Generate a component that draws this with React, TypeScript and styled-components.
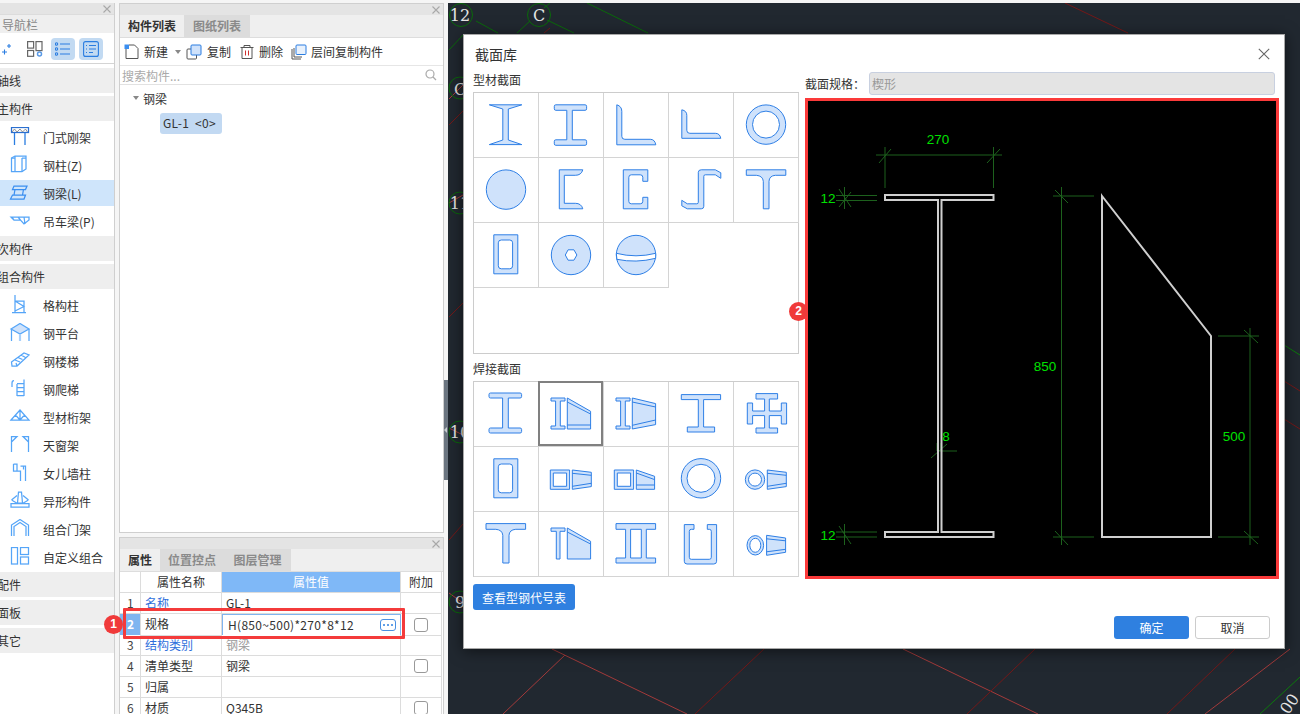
import React from 'react';
import styled, { createGlobalStyle } from 'styled-components';

const FONT = '"Noto Sans CJK SC", "Noto Sans", sans-serif';

const Global = createGlobalStyle`
  html, body { margin: 0; padding: 0; width: 1300px; height: 714px; overflow: hidden; background: #f5f5f5; }
  * { box-sizing: border-box; }
  body { font-family: ${FONT}; font-size: 12px; color: #333; }
`;

const Page = styled.div`
  width: 1300px; height: 714px; padding-top: 3px; display: flex; overflow: hidden; background: #f5f5f5;
`;
const Nav = styled.aside`
  width: 115px; height: 711px; flex: none; background: #fff; border-right: 1px solid #cfcfcf; display: flex; flex-direction: column;
`;
const CloseBar = styled.div<{ $h?: number }>`
  height: ${p => p.$h ?? 11}px; flex: none; background: #e4e4e4; display: flex; align-items: center; justify-content: flex-end; padding-right: 3px; color: #a8a8a8;
`;
const NavTitle = styled.div`
  height: 19px; flex: none; background: #efefef; color: #888; line-height: 19px; padding-left: 2px; font-size: 12px; border-top: 1px solid #dcdcdc;
`;
const NavTools = styled.div`
  height: 31px; flex: none; display: flex; gap: 4px; align-items: center; border-bottom: 1px solid #d4d4d4; background: #fff; padding-top: 1px;
`;
const IconBtn = styled.div<{ $w: number; $active?: boolean; $start?: boolean }>`
  width: ${p => p.$w}px; height: 22px; border-radius: 4px; display: flex; align-items: center; justify-content: ${p => (p.$start ? 'flex-start' : 'center')};
  background: ${p => (p.$active ? '#c2daf2' : 'transparent')};
`;
const NavList = styled.div`
  padding-top: 4px; display: flex; flex-direction: column;
`;
const NavHeader = styled.div<{ $mt?: number }>`
  height: 25px; background: #eeeeee; line-height: 25px; font-size: 12px; margin-top: ${p => p.$mt ?? 0}px; text-indent: -3px; overflow: hidden; color: #333;
`;
const NavGroup = styled.div`
  padding: 3px 0 2px; display: flex; flex-direction: column; gap: 2px;
`;
const NavRow = styled.div<{ $active?: boolean }>`
  height: 26px; display: flex; align-items: center; gap: 12px; padding-left: 9px; font-size: 12px; color: #333;
  background: ${p => (p.$active ? '#cfe5fb' : 'transparent')};
`;
const NavSvg = styled.svg`
  width: 22px; height: 20px; flex: none; fill: none; stroke: #55a5f8; stroke-width: 1.25;
`;
const MidCol = styled.div`
  width: 325px; margin-left: 4px; flex: none; display: flex; flex-direction: column; gap: 4px; padding-top: 0;
`;
const Panel = styled.section<{ $h: number }>`
  height: ${p => p.$h}px; flex: none; border: 1px solid #cfcfcf; background: #fff; display: flex; flex-direction: column; overflow: hidden; position: relative;
`;
const Tabs = styled.div`
  height: 23px; flex: none; background: #efefef; display: flex; border-bottom: 1px solid #ddd;
`;
const Tab = styled.div<{ $active?: boolean; $w: number }>`
  width: ${p => p.$w}px; text-align: center; line-height: 22px; font-weight: 700; font-size: 12px;
  color: ${p => (p.$active ? '#333' : '#8a8a8a')};
  background: ${p => (p.$active ? '#efefef' : '#dcdcdc')};
`;
const Toolbar = styled.div`
  height: 28px; flex: none; display: flex; align-items: center; padding-left: 4px; border-bottom: 1px solid #e6e6e6; font-size: 12px;
`;
const ToolIcon = styled.svg<{ $ml?: number; $mr?: number }>`
  width: 16px; height: 16px; flex: none; fill: none; stroke: #555; stroke-width: 1; margin-left: ${p => p.$ml ?? 0}px; margin-right: ${p => p.$mr ?? 4}px;
`;
const Caret = styled.span<{ $ml?: number }>`
  width: 0; height: 0; border-left: 3px solid transparent; border-right: 3px solid transparent; border-top: 4px solid #888; margin-left: ${p => p.$ml ?? 0}px; flex: none;
`;
const SearchRow = styled.div`
  height: 19px; flex: none; display: flex; align-items: center; justify-content: space-between; padding: 0 6px 0 2px; color: #aaa; font-size: 12px; border-bottom: 1px solid #e2e2e2;
`;
const Tree = styled.div`
  padding: 3px 0 0 13px; display: flex; flex-direction: column; font-size: 12px;
`;
const TreeRoot = styled.div`
  display: flex; align-items: center; gap: 4px; height: 20px; color: #333;
`;
const TreeTag = styled.div`
  margin: 5px 0 0 27px; width: 62px; height: 21px; line-height: 20px; background: #c2d9f2; border-radius: 3px; padding-left: 3px; font-size: 12px; white-space: pre; letter-spacing: .3px;
`;
const PropRow = styled.div<{ $head?: boolean }>`
  display: grid; grid-template-columns: 21px 81px 179px 41px; height: 21px; flex: none; line-height: 20px; font-size: 12px;
  & > * { border-right: 1px solid #dcdcdc; border-bottom: 1px solid #dcdcdc; }
`;
const Idx = styled.div<{ $active?: boolean }>`
  padding-left: 7px; font-size: 12px; color: ${p => (p.$active ? '#fff' : '#444')}; font-weight: ${p => (p.$active ? 700 : 400)};
  background: ${p => (p.$active ? '#7fb5f0' : '#fff')};
`;
const Name = styled.div<{ $blue?: boolean; $center?: boolean }>`
  padding-left: ${p => (p.$center ? 0 : 4)}px; text-align: ${p => (p.$center ? 'center' : 'left')}; color: ${p => (p.$blue ? '#2f6fdc' : '#333')};
`;
const Val = styled.div<{ $head?: boolean; $muted?: boolean }>`
  padding-left: ${p => (p.$head ? 0 : 4)}px; text-align: ${p => (p.$head ? 'center' : 'left')};
  background: ${p => (p.$head ? '#7fb8f7' : '#fff')}; color: ${p => (p.$head ? '#fff' : p.$muted ? '#999' : '#333')};
`;
const EditVal = styled.div`
  display: flex; align-items: center; justify-content: space-between; padding: 0 4px 0 5px; border: 1px solid #7fb5f0 !important; letter-spacing: .3px;
`;
const DotsBtn = styled.span`
  width: 16px; height: 12px; border: 1px solid #4a90e2; border-radius: 3px; display: flex; align-items: center; justify-content: center; gap: 2px;
  & > i { width: 2px; height: 2px; border-radius: 50%; background: #2f80e0; }
`;
const Add = styled.div<{ $center?: boolean }>`
  display: flex; align-items: center; justify-content: center; text-align: center;
`;
const Check = styled.span`
  width: 14px; height: 14px; border: 1px solid #999; border-radius: 3px; background: #fff;
`;
const RedBox = styled.div`
  position: absolute; left: 3px; top: 70px; width: 282px; height: 31px; border: 3.5px solid #f43b3b; pointer-events: none; border-radius: 1px;
`;
const Badge = styled.div<{ $x: number; $y: number }>`
  position: absolute; left: ${p => p.$x}px; top: ${p => p.$y}px; width: 19px; height: 19px; border-radius: 50%; background: #f03a3a; color: #fff;
  font: 700 12px/19px "Liberation Sans", sans-serif; text-align: center; z-index: 5;
`;
const Splitter = styled.div`
  width: 4px; flex: none; padding-top: 377px;
`;
const Handle = styled.div`
  width: 4px; height: 100px; background: #6b7580; display: flex; align-items: center;
  &::after { content: ''; border-right: 3px solid #c8ccd0; border-top: 3px solid transparent; border-bottom: 3px solid transparent; }
`;
const Canvas = styled.main`
  flex: 1; height: 711px; background: #212830; position: relative; overflow: hidden;
`;
const CanvasSvg = styled.svg`
  position: absolute; left: 0; top: 0;
`;
const Dialog = styled.div`
  position: absolute; left: 15px; top: 31px; width: 822px; height: 615px; background: #fff; border: 1px solid #a8a8a8; box-shadow: 0 2px 14px rgba(0,0,0,.55);
  display: flex; flex-direction: column; padding: 0 14px 0 9px;
`;
const DialogHead = styled.div`
  height: 37px; flex: none; display: flex; align-items: center; justify-content: space-between; padding: 0 0 0 2px; font-size: 14px; color: #333;
`;
const DialogBody = styled.div`
  display: flex; gap: 6px; flex: none;
`;
const LeftCol = styled.div`
  width: 326px; flex: none; display: flex; flex-direction: column;
`;
const Label = styled.div<{ $pt: number }>`
  padding-top: ${p => p.$pt}px; padding-bottom: 4px; line-height: 16px; font-size: 12px; color: #333;
`;
const SecGrid = styled.div<{ $h: number }>`
  width: 326px; height: ${p => p.$h}px; border: 1px solid #ccc; display: grid; grid-template-columns: repeat(5, 65px); grid-auto-rows: 65px; align-content: start;
`;
const Cell = styled.div<{ $sel?: boolean }>`
  width: 65px; height: 65px; border-right: 1px solid #d4d4d4; border-bottom: 1px solid #d4d4d4; position: relative;
  ${p => p.$sel ? `&::after { content: ''; position: absolute; inset: -1px 0 0 -1px; border: 2px solid #808080; }` : ''}
`;
const SecSvg = styled.svg`
  display: block; width: 64px; height: 64px; fill: #cfe2fb; stroke: #2e7fe6; stroke-width: 1; fill-rule: evenodd;
`;
const PrimaryBtn = styled.button<{ $w: number; $h: number; $mt?: number }>`
  width: ${p => p.$w}px; height: ${p => p.$h}px; margin-top: ${p => p.$mt ?? 0}px; border: 0; border-radius: 3px; background: #2f80e0; color: #fff; font: 12px ${FONT}; padding: 0; flex: none;
`;
const GhostBtn = styled.button`
  width: 75px; height: 23px; border: 1px solid #ccc; border-radius: 3px; background: #fff; color: #333; font: 12px ${FONT}; padding: 0; flex: none;
`;
const RightCol = styled.div`
  width: 474px; flex: none; display: flex; flex-direction: column; gap: 3px;
`;
const SpecRow = styled.div`
  height: 23px; display: flex; align-items: center; font-size: 12px; color: #333;
`;
const SpecLabel = styled.span`
  width: 64px; flex: none;
`;
const SpecInput = styled.div`
  width: 406px; height: 23px; background: #e4e4e4; border: 1px solid #c8d0e0; border-radius: 3px; color: #999; line-height: 21px; padding-left: 2px;
`;
const Preview = styled.div`
  width: 474px; height: 481px; border: 3px solid #fb3a3a; background: #000; position: relative;
`;
const PreviewSvg = styled.svg`
  display: block;
`;
const Footer = styled.div`
  display: flex; justify-content: flex-end; gap: 6px; margin-top: 6px; align-items: flex-start;
`;

const CloseX = ({ s = 8 }: { s?: number }) => (
  <svg width={s} height={s} viewBox="0 0 8 8" stroke="currentColor" strokeWidth="1.1" fill="none"><path d="M.5.5l7 7M7.5.5l-7 7" /></svg>
);

const I = (l: number, r: number, t: number, b: number, ft: number, wl: number, wr: number, c = 0) =>
  `M${l + c} ${t}H${r - c}Q${r} ${t} ${r} ${t + c}V${t + ft - c}Q${r} ${t + ft} ${r - c} ${t + ft}H${wr}V${b - ft}H${r - c}Q${r} ${b - ft} ${r} ${b - ft + c}V${b - c}Q${r} ${b} ${r - c} ${b}H${l + c}Q${l} ${b} ${l} ${b - c}V${b - ft + c}Q${l} ${b - ft} ${l + c} ${b - ft}H${wl}V${t + ft}H${l + c}Q${l} ${t + ft} ${l} ${t + ft - c}V${t + c}Q${l} ${t} ${l + c} ${t}Z`;

const hollow = 'M20.5 12.5H44.5V51.5H20.5ZM28 17.7H36.5Q39.3 17.7 39.3 20.5V43.5Q39.3 46.5 36.5 46.5H28Q25 46.5 25 43.5V20.5Q25 17.7 28 17.7Z';
const ring = (x: number, y: number, r: number) => `M${x - r} ${y}a${r} ${r} 0 1 0 ${2 * r} 0a${r} ${r} 0 1 0 ${-2 * r} 0Z`;
const ell = (x: number, y: number, a: number, b: number) => `M${x - a} ${y}a${a} ${b} 0 1 0 ${2 * a} 0a${a} ${b} 0 1 0 ${-2 * a} 0Z`;
const smallI = I(12.7, 26.7, 16.7, 47.7, 3, 17.3, 22);

const rolled: React.ReactNode[] = [
  <path d="M16 12.5H48.5L35 16.7V47.7L48.5 52.3H16L29.5 47.7V16.7Z" />,
  <path d={I(16, 48.3, 12.5, 53, 5.5, 28.5, 34, 1.5)} />,
  <path d="M13.5 12.5Q18.5 14 18.5 19V44Q18.5 47 21.5 47H47Q51.5 47 52.5 52.5H13.5Z" />,
  <path d="M13.5 17.5Q18.5 18.5 18.5 23V38Q18.5 41 21.5 41H47Q51.5 41 52.5 46H13.5Z" />,
  <path d={ring(32.7, 32.3, 19.7) + ring(32.7, 32.3, 13.5)} />,
  <path d={ring(32.7, 32.3, 19.7)} />,
  <path d="M21 12.5H44.5Q43 18 37 18H26V46H37Q43 46 44.5 51.5H21Z" />,
  <path d="M20 12.5H44.5V24H39.5V20Q39.5 17.5 37 17.5H28Q25.5 17.5 25.5 20V44Q25.5 46.5 28 46.5H37Q39.5 46.5 39.5 44V40H44.5V51.5H20Z" />,
  <path d="M30 15Q30 12.5 33 12.5H47L52.5 15.5V21L47 17.5H37Q35.5 17.5 35.5 19V49Q35.5 51.5 33 51.5H19L13.5 48.5V43L19 46.5H28.5Q30 46.5 30 45Z" />,
  <path d="M13 12.5H52.5V18H42Q36 18.5 35.7 24V51.5H30V24Q29.5 18.5 23 18H13Z" />,
  <path d={hollow} />,
  <path d={ring(32.7, 32.7, 19.7) + 'M27 32.7L29.8 27.5H35.6L38.6 32.7L35.6 37.9H29.8Z'} />,
  <>
    <path d={ring(32.7, 32.7, 19.7)} />
    <path d="M13 31Q32.7 36 52.4 31V36Q32.7 41 13.6 37Z" fill="#fff" />
  </>,
];

const wedgeAOutline = <path d="M29 16.7L52.3 30V47.7H29Z" />;
const wedgeA = (
  <>
    {wedgeAOutline}
    <path d="M29 20.7L52.3 32.7M29 43.7H52.3" fill="none" />
  </>
);
const wedgeB = (
  <>
    <path d="M29 16.7L52.3 22.3V43.3L29 47.7Z" />
    <path d="M29 20.7L52.3 25.7M29 44L52.3 38.7" fill="none" />
  </>
);
const wedgeSmall = (x: number) => (
  <>
    <path d={`M${x} 23.7L${x + 19} 26V40.3L${x} 43Z`} />
    <path d={`M${x} 27L${x + 19} 29M${x} 40L${x + 19} 37`} fill="none" />
  </>
);

const welded: React.ReactNode[] = [
  <path d={I(15.7, 48.3, 11.7, 51.7, 5, 29.3, 35, 1.5)} />,
  <><path d={smallI} />{wedgeA}</>,
  <><path d={smallI} />{wedgeB}</>,
  <path d="M13 13.300H52.300V18.300H35.300V45.700H46.300V50.700H19V45.700H30V18.300H13Z" />,
  <path d="M22.7 12.3H44.3V17.7H36V29.7H48V21.7H53.3V42.7H48V34.3H36V46.7H44.3V51.7H22.7V46.7H31.3V34.3H19.3V42.7H14V21.7H19.3V29.7H31.3V17.7H22.7Z" />,
  <path d={hollow} />,
  <><path d="M12 23.7H31.3V43H12ZM15 26.7H28.3V40H15Z" />{wedgeSmall(34)}</>,
  <>
    <path d="M11 23.7H30.3V43H11ZM14 26.7H27.3V40H14Z" />
    <path d="M33 23.7L51.3 30V43H33Z" />
    <path d="M33 26.7L51.3 33.3M33 38.7H51.3" fill="none" />
  </>,
  <path d={ring(32.7, 32, 19.7) + ring(32.7, 32, 14)} />,
  <><path d={ring(21.7, 33.3, 9.7) + ring(21.7, 33.3, 6.5)} />{wedgeSmall(34)}</>,
  <path d="M12.7 12.3H52.3V18H42.5Q36 18.5 35.7 24V51.7H29.5V24Q29 18.5 22.5 18H12.7Z" />,
  <>
    <path d="M12.7 16.7H26.7V20H21.7V47.7H18V20H12.7Z" />
    {wedgeAOutline}
    <path d="M29 20.7L52.3 32.7" fill="none" />
  </>,
  <path d="M12.7 12.3H52.3V18H43V46.7H52.3V51.7H12.7V46.7H22.3V18H12.7ZM27.3 18V46.7H38V18Z" />,
  <path d="M16 13.3H25.7V18H23Q21 18 21 20V46Q21 48 23 48H41Q43 48 43 46V20Q43 18 41 18H39V13.3H48.3V50Q48.3 52.7 45.5 52.7H18.7Q16 52.7 16 50Z" />,
  <>
    <path d={ell(22, 34, 8.3, 9.7) + ell(22, 34, 5.5, 7)} />
    <path d="M33.3 24L52.3 26.7V41L33.3 44Z" />
    <path d="M33.3 27.5L52.3 29.5M33.3 40.5L52.3 38" fill="none" />
  </>,
];

const Section = ({ children }: { children: React.ReactNode }) => (
  <SecSvg viewBox="0.7 0.7 64 64">{children}</SecSvg>
);

const navIcon = (c: React.ReactNode) => <NavSvg viewBox="0 0 22 20">{c}</NavSvg>;

const icons: Record<string, React.ReactNode> = {
  portal: <><rect x="2.5" y=".5" width="17" height="5" stroke="#2a6fd0" /><path d="M3 5l2.5-3 2.5 3 3-3 2.500 3 3-3 2 3" stroke="#777" strokeWidth=".8" /><path d="M5.5 6v12M16 6v12" stroke="#2a7de1" strokeWidth="1.3" /></>,
  column: <><path d="M2.5 3L6 1h11v13l-4 2.500H2.500Z" /><path d="M6 1v2H2.500M13 3v13.500M13 3h4M6 3v13" /></>,
  beam: <path d="M5 3h13l-1.500 3.500H3.500ZM3.500 12h13L15 16H1.500ZM6 6.500L5 12M14.500 6.500l-1 5.500" stroke="#3a8ef0" />,
  crane: <path d="M2 6h18v3l-5 4-3.500-4H5Zm1 0l2 3m4-3l2.500 3m3.500-3l1 7" />,
  lattice: <path d="M6 0v17.500M3 17.500h14M6 6h9v11.500M6 6l9 5.500L6 16" />,
  platform: <><path d="M2 6l9-5.500L20 6l-9 5Z" fill="#cfe2fb" /><path d="M2.500 6v12M20 6v12" /><path d="M11 11v7" stroke="#a8d0fb" strokeWidth="2.200" /></>,
  stairs: <path d="M2.500 11L15 2l5 2L8 15H3ZM6 9l5 2M9 6.500l4.500 2M12 4l4.500 2.500M3 15l-.5-4M8 15l-1-3" />,
  ladder: <path d="M5 1.500Q3 1.500 3 4v4M8 5v12M15 .500V17M8 4.500h7M8 8.500h7M8 12.500h7M8 16.500h7" />,
  truss: <path d="M2 13l9-10 9 10ZM11 3v10M6.500 8l4.500 5 4.500-5" />,
  skylight: <path d="M2.500 17V1.500H8L2.500 7M19.500 17V1.500H14L19.500 7" />,
  parapet: <path d="M4.500 1H8v7h3.500v10M14.500 3v3.500M11.500 3h5v15M4.500 1v7H8" />,
  special: <path d="M2.500 9L8 4.500M19.500 9L14 4.500M9.500 1h3l1 11H8.500ZM2 12.500h18v3.500H2ZM2.500 9l6 3.500M19.500 9l-6 3.500" />,
  gate: <path d="M2.500 17V6L11 .5 19.500 6v11M5 17V7.500L11 3.500l6 4V17" />,
  custom: <><rect x="2.500" y=".5" width="6" height="16.500" /><rect x="11.500" y=".5" width="8" height="7" /><rect x="11.500" y="10" width="8" height="7" /></>,
};

const group1 = [['门式刚架', 'portal'], ['钢柱(Z)', 'column'], ['钢梁(L)', 'beam'], ['吊车梁(P)', 'crane']];
const group2 = [['格构柱', 'lattice'], ['钢平台', 'platform'], ['钢楼梯', 'stairs'], ['钢爬梯', 'ladder'], ['型材桁架', 'truss'], ['天窗架', 'skylight'], ['女儿墙柱', 'parapet'], ['异形构件', 'special'], ['组合门架', 'gate'], ['自定义组合', 'custom']];

const DG = '#1d611d';
const Dim = () => (
  <g stroke={DG} strokeWidth="1" fill="none">
    <path d="M885 147V188M993.500 147V188M876 155H1002M879 163L891 149M987 163L1000 149" />
    <path d="M836 195.500H877M836 200.500H877M844.500 187V209M839 189L851 207M839 207L851 192" />
    <path d="M836 532H877M836 537H877M844.500 524V545M839 526L851 544" />
    <path d="M937 451H957M931 458L947 444M937 443V451M941 443V451" />
    <path d="M1061.500 187V545M1053 537H1094M1053 196H1094M1055 531L1068 545M1055 190L1068 203" />
    <path d="M1250 328V545M1218 336H1259M1218 537H1259M1244 330L1258 343M1244 531L1258 544" />
  </g>
);

const NumText = styled.text`
  font: 13.5px "Liberation Sans", sans-serif; fill: #00e000; text-anchor: middle;
`;
const GridLabel = styled.text`
  font: 16px "DejaVu Serif", serif; fill: #e4e4e4; text-anchor: middle;
`;

const lines: { d: string; c: string }[] = [
  { d: 'M104 646L239 711', c: '#a23a3a' }, { d: 'M117 652L55 711', c: '#a23a3a' },
  { d: 'M316 646L247 711', c: '#741818' }, { d: 'M455 646L590 711', c: '#a23a3a' },
  { d: 'M587 646L519 711', c: '#741818' }, { d: 'M787 646L719 711', c: '#741818' },
  { d: 'M842 646L757 711', c: '#a23a3a' }, { d: 'M852 674L812 711', c: '#0c7a0c' },
  { d: 'M28 18L50 30M82 18L69 30M99 17L126 30M139 0L200 30', c: '#0a6a0a' },
  { d: 'M102 0L96 5M1 47L15 32', c: '#0a6a0a' },
  { d: 'M102 25L96 30M617 0L680 30', c: '#741818' },
  { d: 'M1 96L15 82M1 200L15 192M1 425L15 432M1 590L15 600', c: '#a23a3a' },
  { d: 'M1 122L15 108M1 314L15 300M1 537L15 521', c: '#741818' },
  { d: 'M836 342L852 352', c: '#0c7a0c' }, { d: 'M836 378L852 388M836 416L852 426', c: '#741818' },
];

export default function App() {
  return (
    <>
      <Global />
      <Page>
        <Nav>
          <CloseBar><CloseX /></CloseBar>
          <NavTitle>导航栏</NavTitle>
          <NavTools>
            <IconBtn $w={23} $start>
              <svg width="14" height="14" viewBox="0 0 14 14" fill="none" stroke="#2a7de1" strokeWidth="1.1"><path d="M2 10h5M4.500 7.500v5M7 4h4M9 2v4" /></svg>
            </IconBtn>
            <IconBtn $w={20} $start>
              <svg width="16" height="16" viewBox="0 0 16 16" fill="none" stroke="#666" strokeWidth="1.2"><rect x=".6" y=".6" width="6" height="6.500" /><rect x="9" y=".6" width="6" height="9" /><rect x=".6" y="9.500" width="6" height="5.800" /><circle cx="12.500" cy="13" r="2" stroke="#5a9ae6" strokeWidth="1.500" /></svg>
            </IconBtn>
            <IconBtn $w={24} $active>
              <svg width="16" height="14" viewBox="0 0 16 14" fill="none" stroke="#2a7de1" strokeWidth="1.1"><circle cx="1.500" cy="2" r="1.200" /><circle cx="1.500" cy="7" r="1.200" /><circle cx="1.500" cy="12" r="1.200" /><path d="M5 2h10M5 7h10M5 12h10" /></svg>
            </IconBtn>
            <IconBtn $w={24} $active>
              <svg width="16" height="16" viewBox="0 0 16 16" fill="none" stroke="#2a7de1" strokeWidth="1.1"><rect x=".6" y=".6" width="14.800" height="14.800" rx="2" /><path d="M3 4.500h1M6 4.500h7M3 8h1M6 8h7M3 11.500h1M6 11.500h4" /></svg>
            </IconBtn>
          </NavTools>
          <NavList>
            <NavHeader>轴线</NavHeader>
            <NavHeader $mt={3}>主构件</NavHeader>
            <NavGroup>
              {group1.map(([t, k]) => (
                <NavRow key={t} $active={k === 'beam'}>{navIcon(icons[k])}<span>{t}</span></NavRow>
              ))}
            </NavGroup>
            <NavHeader>次构件</NavHeader>
            <NavHeader $mt={3}>组合构件</NavHeader>
            <NavGroup>
              {group2.map(([t, k]) => (
                <NavRow key={t}>{navIcon(icons[k])}<span>{t}</span></NavRow>
              ))}
            </NavGroup>
            <NavHeader>配件</NavHeader>
            <NavHeader $mt={3}>面板</NavHeader>
            <NavHeader $mt={3}>其它</NavHeader>
          </NavList>
        </Nav>

        <MidCol>
          <Panel $h={530}>
            <CloseBar><CloseX /></CloseBar>
            <Tabs>
              <Tab $active $w={64}>构件列表</Tab>
              <Tab $w={66}>图纸列表</Tab>
            </Tabs>
            <Toolbar>
              <ToolIcon viewBox="0 0 16 16" $mr={4}>
                <path d="M2 4V14.500H14V4.500L10.500 1H5" />
                <rect x="0.500" y="0.500" width="4.500" height="4.500" fill="#3a8ef0" stroke="none" />
              </ToolIcon>
              <span>新建</span>
              <Caret $ml={7} />
              <ToolIcon viewBox="0 0 16 16" $ml={5} $mr={5}>
                <rect x="1" y="5" width="9.500" height="10" rx="1" />
                <rect x="5" y="1" width="10" height="10" rx="1" fill="#cfe2fb" stroke="#2a7de1" />
              </ToolIcon>
              <span>复制</span>
              <ToolIcon viewBox="0 0 16 16" $ml={8} $mr={4}>
                <path d="M1.500 3.500h13M5 3.500V1.500h6v2M3 3.500v11h10v-11" />
                <path d="M6.500 6.500v5M9.500 6.500v5" stroke="#d03030" />
              </ToolIcon>
              <span>删除</span>
              <ToolIcon viewBox="0 0 16 16" $ml={8} $mr={4}>
                <path d="M1 5v10h9M3 4v9h8" />
                <rect x="5" y="1" width="10" height="9.500" rx="1" fill="#e8f1fc" stroke="#2a7de1" />
              </ToolIcon>
              <span>层间复制构件</span>
            </Toolbar>
            <SearchRow>
              <span>搜索构件...</span>
              <svg width="12" height="12" viewBox="0 0 12 12" fill="none" stroke="#aaa" strokeWidth="1.200"><circle cx="5" cy="5" r="4" /><path d="M8 8l3 3" /></svg>
            </SearchRow>
            <Tree>
              <TreeRoot><Caret />钢梁</TreeRoot>
              <TreeTag>GL-1  &lt;0&gt;</TreeTag>
            </Tree>
          </Panel>
          <Panel $h={178}>
            <CloseBar><CloseX /></CloseBar>
            <Tabs>
              <Tab $active $w={40}>属性</Tab>
              <Tab $w={64}>位置控点</Tab>
              <Tab $w={67}>图层管理</Tab>
            </Tabs>
            <PropRow>
              <Idx />
              <Name $center>属性名称</Name>
              <Val $head>属性值</Val>
              <Add>附加</Add>
            </PropRow>
            <PropRow>
              <Idx>1</Idx><Name $blue>名称</Name><Val>GL-1</Val><Add />
            </PropRow>
            <PropRow>
              <Idx $active>2</Idx><Name>规格</Name>
              <EditVal>H(850~500)*270*8*12<DotsBtn><i /><i /><i /></DotsBtn></EditVal>
              <Add><Check /></Add>
            </PropRow>
            <PropRow>
              <Idx>3</Idx><Name $blue>结构类别</Name><Val $muted>钢梁</Val><Add />
            </PropRow>
            <PropRow>
              <Idx>4</Idx><Name>清单类型</Name><Val>钢梁</Val><Add><Check /></Add>
            </PropRow>
            <PropRow>
              <Idx>5</Idx><Name>归属</Name><Val /><Add />
            </PropRow>
            <PropRow>
              <Idx>6</Idx><Name>材质</Name><Val>Q345B</Val><Add><Check /></Add>
            </PropRow>
            <RedBox />
          </Panel>
        </MidCol>
        <Badge $x={104} $y={615}>1</Badge>
        <Splitter><Handle /></Splitter>

        <Canvas>
          <CanvasSvg width="852" height="711" viewBox="0 0 852 711">
            {lines.map(l => <path key={l.d} d={l.d} stroke={l.c} strokeWidth="1" fill="none" />)}
            <g fill="none" stroke="#0a6a0a" strokeWidth="1">
              <circle cx="13" cy="12" r="11.500" />
              <circle cx="91" cy="12" r="11.500" />
              <circle cx="12" cy="85" r="11" />
              <circle cx="12" cy="200" r="11" />
              <circle cx="12" cy="429" r="11" />
              <circle cx="12" cy="599" r="11" />
            </g>
            <GridLabel x="12" y="18">12</GridLabel>
            <GridLabel x="91" y="18">C</GridLabel>
            <GridLabel x="12" y="92">C</GridLabel>
            <GridLabel x="12" y="206">11</GridLabel>
            <GridLabel x="12" y="435">10</GridLabel>
            <GridLabel x="12" y="605">9</GridLabel>
            <GridLabel x="846" y="704" transform="rotate(-55 846 704)">00</GridLabel>
          </CanvasSvg>

          <Dialog>
            <DialogHead>
              <span>截面库</span>
              <svg width="12" height="12" viewBox="0 0 12 12" stroke="#666" strokeWidth="1.100" fill="none"><path d="M.8.8l10.400 10.400M11.200.8L.8 11.200" /></svg>
            </DialogHead>
            <DialogBody>
              <LeftCol>
                <Label $pt={0}>型材截面</Label>
                <SecGrid $h={262}>
                  {rolled.map((s, i) => <Cell key={i}><Section>{s}</Section></Cell>)}
                </SecGrid>
                <Label $pt={7}>焊接截面</Label>
                <SecGrid $h={196}>
                  {welded.map((s, i) => <Cell key={i} $sel={i === 1}><Section>{s}</Section></Cell>)}
                </SecGrid>
                <PrimaryBtn $w={102} $h={26} $mt={7}>查看型钢代号表</PrimaryBtn>
              </LeftCol>
              <RightCol>
                <SpecRow>
                  <SpecLabel>截面规格：</SpecLabel>
                  <SpecInput>楔形</SpecInput>
                </SpecRow>
                <Preview>
                  <PreviewSvg width="468" height="475" viewBox="808 101 468 475">
                    <Dim />
                    <g fill="none" stroke="#cfcfcf" strokeWidth="2">
                      <path d="M885 195H993.500V200H941.500V532H993.500V537H885V532H938V200H885Z" />
                      <path d="M1102 196L1211 336V537H1102Z" />
                    </g>
                    <NumText x="938" y="144">270</NumText>
                    <NumText x="828" y="203">12</NumText>
                    <NumText x="828" y="540">12</NumText>
                    <NumText x="946" y="441">8</NumText>
                    <NumText x="1045" y="371">850</NumText>
                    <NumText x="1234" y="441">500</NumText>
                  </PreviewSvg>
                  <Badge $x={-19} $y={201}>2</Badge>
                </Preview>
              </RightCol>
            </DialogBody>
            <Footer>
              <PrimaryBtn $w={75} $h={23}>确定</PrimaryBtn>
              <GhostBtn>取消</GhostBtn>
            </Footer>
          </Dialog>
        </Canvas>
      </Page>
    </>
  );
}
